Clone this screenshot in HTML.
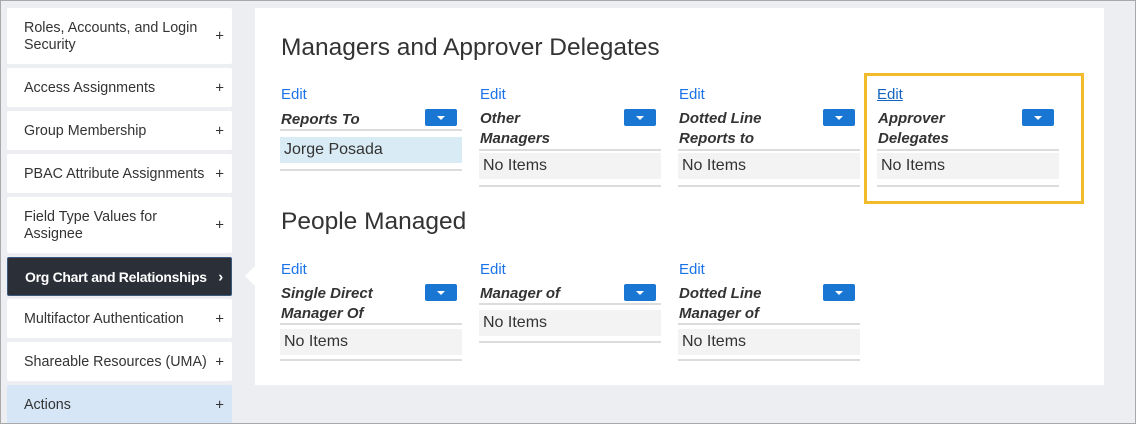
<!DOCTYPE html>
<html><head><style>
*{box-sizing:border-box;margin:0;padding:0}
body{width:1136px;height:424px;background:#edeef2;font-family:"Liberation Sans",sans-serif;position:relative;overflow:hidden}
.frame{position:absolute;left:0;top:0;width:1136px;height:424px;border:1px solid #a9a9a9;z-index:5}
.si{position:absolute;left:7px;width:225px;background:#fff;border-radius:2px;color:#333;font-size:14.3px;line-height:17px;padding-left:17px;padding-top:2px;display:flex;align-items:center;white-space:nowrap}
.si .p{position:absolute;right:8px;top:50%;transform:translateY(-50%);font-size:15px}
.dark{background:#2a2f38;color:#fff;font-weight:bold;border:1px solid #3b5a80;font-size:14px;letter-spacing:-0.3px}
.act{background:#d6e6f7}
.panel{position:absolute;left:255px;top:8px;width:849px;height:377px;background:#fff}
.h{position:absolute;font-size:24.5px;color:#333;left:281px}
.edit{position:absolute;color:#1a73e8;font-size:15px}
.t{position:absolute;font-style:italic;font-weight:bold;font-size:15px;color:#333;line-height:20px}
.btn{position:absolute;width:32px;height:17px;background:#1976d2;border-radius:2px}
.btn:after{content:"";position:absolute;left:12px;top:7px;border-left:4px solid transparent;border-right:4px solid transparent;border-top:4px solid #fff}
.ln{position:absolute;height:2px;background:#dcdcdc;width:182px}
.box{position:absolute;width:182px;height:26px;background:#f3f3f3;font-size:16px;color:#333;padding-left:4px;line-height:26px}
</style></head><body>
<div class="frame"></div>
<div class="si" style="top:8px;height:56px">Roles, Accounts, and Login<br>Security<span class="p">+</span></div>
<div class="si" style="top:68px;height:39px">Access Assignments<span class="p">+</span></div>
<div class="si" style="top:111px;height:39px">Group Membership<span class="p">+</span></div>
<div class="si" style="top:154px;height:39px">PBAC Attribute Assignments<span class="p">+</span></div>
<div class="si" style="top:197px;height:56px">Field Type Values for<br>Assignee<span class="p">+</span></div>
<div class="si dark" style="top:257px;height:39px">Org Chart and Relationships<span class="p">›</span></div>
<div class="si" style="top:299px;height:39px">Multifactor Authentication<span class="p">+</span></div>
<div class="si" style="top:342px;height:39px">Shareable Resources (UMA)<span class="p">+</span></div>
<div class="si act" style="top:385px;height:39px">Actions<span class="p">+</span></div>
<div style="position:absolute;left:245px;top:266px;border-top:10px solid transparent;border-bottom:10px solid transparent;border-right:10px solid #fff"></div>
<div class="panel"></div>
<div class="h" style="top:34px">Managers and Approver Delegates</div>
<div class="h" style="top:208px">People Managed</div>

<div class="edit" style="left:281px;top:86px">Edit</div>
<div class="t" style="left:281px;top:110px">Reports To</div>
<div class="btn" style="left:425px;top:109px"></div>
<div class="ln" style="left:280px;top:129px"></div>
<div class="box" style="left:280px;top:137px;background:#d9ebf4">Jorge Posada</div>
<div class="ln" style="left:280px;top:169px"></div>

<div class="edit" style="left:480px;top:86px">Edit</div>
<div class="t" style="left:480px;top:109px">Other<br>Managers</div>
<div class="btn" style="left:624px;top:109px"></div>
<div class="ln" style="left:479px;top:149px"></div>
<div class="box" style="left:479px;top:153px">No Items</div>
<div class="ln" style="left:479px;top:185px"></div>

<div class="edit" style="left:679px;top:86px">Edit</div>
<div class="t" style="left:679px;top:109px">Dotted Line<br>Reports to</div>
<div class="btn" style="left:823px;top:109px"></div>
<div class="ln" style="left:678px;top:149px"></div>
<div class="box" style="left:678px;top:153px">No Items</div>
<div class="ln" style="left:678px;top:185px"></div>

<div style="position:absolute;left:864px;top:73px;width:220px;height:131px;border:3px solid #f2bb2b"></div>
<div class="edit" style="left:877px;top:86px;color:#1565c0;text-decoration:underline">Edit</div>
<div class="t" style="left:878px;top:109px">Approver<br>Delegates</div>
<div class="btn" style="left:1022px;top:109px"></div>
<div class="ln" style="left:877px;top:149px"></div>
<div class="box" style="left:877px;top:153px">No Items</div>
<div class="ln" style="left:877px;top:185px"></div>

<div class="edit" style="left:281px;top:261px">Edit</div>
<div class="t" style="left:281px;top:284px">Single Direct<br>Manager Of</div>
<div class="btn" style="left:425px;top:284px"></div>
<div class="ln" style="left:280px;top:323px"></div>
<div class="box" style="left:280px;top:329px">No Items</div>
<div class="ln" style="left:280px;top:359px"></div>

<div class="edit" style="left:480px;top:261px">Edit</div>
<div class="t" style="left:480px;top:284px">Manager of</div>
<div class="btn" style="left:624px;top:284px"></div>
<div class="ln" style="left:479px;top:303px"></div>
<div class="box" style="left:479px;top:310px">No Items</div>
<div class="ln" style="left:479px;top:341px"></div>

<div class="edit" style="left:679px;top:261px">Edit</div>
<div class="t" style="left:679px;top:284px">Dotted Line<br>Manager of</div>
<div class="btn" style="left:823px;top:284px"></div>
<div class="ln" style="left:678px;top:323px"></div>
<div class="box" style="left:678px;top:329px">No Items</div>
<div class="ln" style="left:678px;top:359px"></div>
</body></html>
